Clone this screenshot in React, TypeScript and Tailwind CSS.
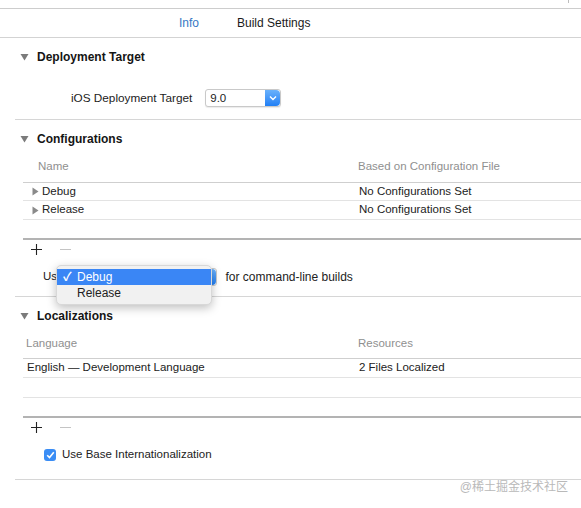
import React from "react"

const font = { fontFamily: '"Liberation Sans", Arial, "Noto Sans CJK SC", sans-serif' }

function DownTriangle() {
  return (
    <svg width="9" height="8" viewBox="0 0 9 8" className="shrink-0">
      <path d="M0.5 1 L8.5 1 L4.5 7.5 Z" fill="#7b7b7b" />
    </svg>
  )
}

function RightTriangle() {
  return (
    <svg width="7" height="9" viewBox="0 0 7 9" className="shrink-0">
      <path d="M0.5 0.5 L6.5 4.5 L0.5 8.5 Z" fill="#8a8a8a" />
    </svg>
  )
}

function SectionHeader({ title, h }: { title: string; h: string }) {
  return (
    <div className={`flex items-center pl-[20px] gap-[8px] ${h}`}>
      <DownTriangle />
      <span className="text-[12px] font-bold text-[#151515]">{title}</span>
    </div>
  )
}

function PlusMinus() {
  return (
    <div className="flex items-center h-[18px] pl-[31px] gap-[18px]">
      <svg width="11" height="11" viewBox="0 0 11 11">
        <path d="M5.5 0 V11 M0 5.5 H11" stroke="#222" strokeWidth="1.1" />
      </svg>
      <svg width="11" height="11" viewBox="0 0 11 11">
        <path d="M0 5.5 H11" stroke="#c4c4c4" strokeWidth="1" />
      </svg>
    </div>
  )
}

function BlueStepper({ kind }: { kind: "down" | "updown" }) {
  return (
    <div className="w-[15px] h-full rounded-r-[4px] bg-gradient-to-b from-[#69b1fb] to-[#1f7ff5] flex items-center justify-center">
      {kind === "down" ? (
        <svg width="8" height="6" viewBox="0 0 8 6">
          <path d="M1 1.5 L4 4.5 L7 1.5" stroke="#fff" strokeWidth="1.4" fill="none" />
        </svg>
      ) : (
        <svg width="8" height="12" viewBox="0 0 8 12">
          <path d="M1.5 4.5 L4 2 L6.5 4.5 M1.5 7.5 L4 10 L6.5 7.5" stroke="#fff" strokeWidth="1.3" fill="none" />
        </svg>
      )}
    </div>
  )
}

export default function App() {
  return (
    <div className="relative w-[581px] h-[508px] bg-white overflow-hidden text-[11.5px] text-[#222]" style={font}>
      {/* window top edge */}
      <div className="h-[9px] border-b border-[#cdcdcd]">
        <div className="ml-[568px] w-px h-[3px] bg-[#bdbdbd]" />
      </div>

      {/* tabs */}
      <div className="h-[29px] border-b border-[#d3d3d3] flex items-center pl-[179px] gap-[38px] text-[12px]">
        <span className="text-[#3779c4]">Info</span>
        <span className="text-[#1a1a1a]">Build Settings</span>
      </div>

      {/* Deployment Target */}
      <SectionHeader title="Deployment Target" h="h-[38px]" />
      <div className="mt-[13px] flex items-center h-[18px] pl-[71px] gap-[13px]">
        <span className="text-[11.75px]">iOS Deployment Target</span>
        <div className="flex h-[18px] w-[76px] border border-[#c9c9c9] rounded-[3px] bg-white shadow-[0_1px_1px_rgba(0,0,0,0.08)]">
          <span className="flex-1 pl-[4px] leading-[16px]">9.0</span>
          <BlueStepper kind="down" />
        </div>
      </div>
      <div className="mt-[12px] ml-[15px] border-b border-[#d6d6d6]" />

      {/* Configurations */}
      <SectionHeader title="Configurations" h="h-[37px]" />
      <div className="ml-[23px]">
        <div className="grid grid-cols-[335px_1fr] h-[26px] items-center pb-[6px] border-b border-[#cfcfcf] text-[#8f8f8f]">
          <span className="pl-[15px]">Name</span>
          <span>Based on Configuration File</span>
        </div>
        <div className="grid grid-cols-[335px_1fr] h-[18px] items-center border-b border-[#e3e3e3]">
          <span className="flex items-center pl-[9px] gap-[3px]">
            <RightTriangle />
            Debug
          </span>
          <span className="pl-[1px]">No Configurations Set</span>
        </div>
        <div className="grid grid-cols-[335px_1fr] h-[19px] items-center border-b border-[#e3e3e3]">
          <span className="flex items-center pl-[9px] gap-[3px]">
            <RightTriangle />
            Release
          </span>
          <span className="pl-[1px]">No Configurations Set</span>
        </div>
        <div className="h-[20px] border-b-2 border-[#b3b3b3]" />
      </div>
      <PlusMinus />
      <div className="mt-[10px] flex items-center h-[18px] pl-[43px]">
        <span>Use</span>
        <div className="ml-[2px] flex h-[18px] w-[152px] border border-[#c9c9c9] rounded-[3px] bg-white">
          <span className="flex-1" />
          <BlueStepper kind="updown" />
        </div>
        <span className="ml-[8px] text-[12px]">for command-line builds</span>
      </div>
      <div className="mt-[10px] ml-[15px] border-b border-[#d6d6d6]" />

      {/* Localizations */}
      <SectionHeader title="Localizations" h="h-[38px]" />
      <div className="ml-[23px]">
        <div className="grid grid-cols-[335px_1fr] h-[24px] items-center pb-[6px] border-b border-[#cfcfcf] text-[#8f8f8f]">
          <span className="pl-[3px]">Language</span>
          <span>Resources</span>
        </div>
        <div className="grid grid-cols-[335px_1fr] h-[19px] items-center border-b border-[#e3e3e3]">
          <span className="pl-[4px]">English — Development Language</span>
          <span className="pl-[1px]">2 Files Localized</span>
        </div>
        <div className="h-[20px] border-b border-[#e3e3e3]" />
        <div className="h-[20px] border-b-2 border-[#b3b3b3]" />
      </div>
      <PlusMinus />
      <div className="mt-[10px] flex items-center h-[18px] pl-[44px] gap-[6px]">
        <div className="w-[12px] h-[12px] rounded-[3px] bg-[#3a8df5] flex items-center justify-center">
          <svg width="9" height="8" viewBox="0 0 9 8">
            <path d="M1.2 4.2 L3.5 6.5 L7.8 1.2" stroke="#fff" strokeWidth="1.6" fill="none" />
          </svg>
        </div>
        <span>Use Base Internationalization</span>
      </div>
      <div className="mt-[15px] ml-[15px] border-b border-[#d6d6d6]" />
      <div className="pr-[13px] text-right text-[12px] leading-[14px] text-[#b9b9b9]">@稀土掘金技术社区</div>

      {/* open popup menu */}
      <div className="absolute left-[56px] top-[265px] w-[156px] h-[40px] rounded-[5px] bg-[#f1f1f1] border border-[#d8d8d8] shadow-[0_3px_10px_rgba(0,0,0,0.25)] pt-[3px]">
        <div className="h-[16px] bg-[#3a86f5] text-white flex items-center">
          <span className="w-[20px] pl-[6px] text-[12px] font-bold">✓</span>
          <span className="text-[12px]">Debug</span>
        </div>
        <div className="h-[16px] flex items-center pl-[20px] text-[12px]">Release</div>
      </div>
    </div>
  )
}
